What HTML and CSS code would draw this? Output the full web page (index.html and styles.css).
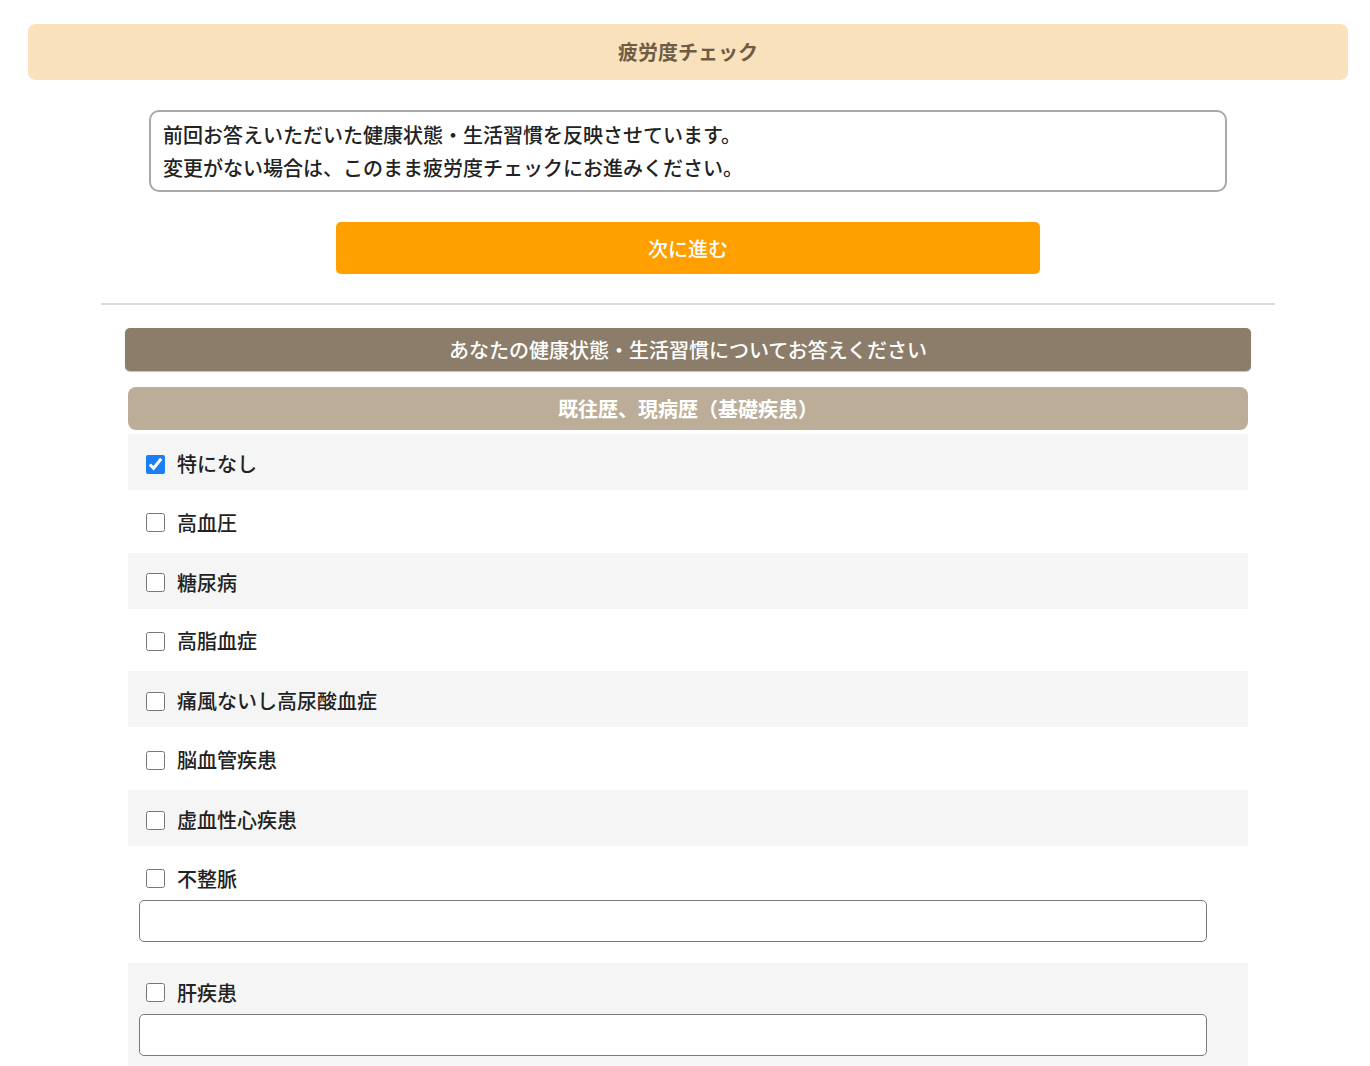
FILE: index.html
```html
<!DOCTYPE html>
<html lang="ja">
<head>
    <meta charset="UTF-8">
    <meta name="viewport" content="width=device-width, initial-scale=1.0">
    <title>疲労度チェック</title>
    <link rel="stylesheet" href="styles.css">
</head>
<body>
    <div class="page">
        <h1 class="page-title">疲労度チェック</h1>

        <div class="notice">
            <p>前回お答えいただいた健康状態・生活習慣を反映させています。</p>
            <p>変更がない場合は、このまま疲労度チェックにお進みください。</p>
        </div>

        <div class="actions">
            <button type="button" class="btn-next">次に進む</button>
        </div>

        <div class="content">
            <hr class="divider">

            <div class="section">
                <h2 class="section-title">あなたの健康状態・生活習慣についてお答えください</h2>

                <div class="question">
                    <h3 class="question-title">既往歴、現病歴（基礎疾患）</h3>
                    <ul class="options">
                        <li class="option">
                            <label class="check"><input type="checkbox" checked><span>特になし</span></label>
                        </li>
                        <li class="option">
                            <label class="check"><input type="checkbox"><span>高血圧</span></label>
                        </li>
                        <li class="option">
                            <label class="check"><input type="checkbox"><span>糖尿病</span></label>
                        </li>
                        <li class="option">
                            <label class="check"><input type="checkbox"><span>高脂血症</span></label>
                        </li>
                        <li class="option">
                            <label class="check"><input type="checkbox"><span>痛風ないし高尿酸血症</span></label>
                        </li>
                        <li class="option">
                            <label class="check"><input type="checkbox"><span>脳血管疾患</span></label>
                        </li>
                        <li class="option">
                            <label class="check"><input type="checkbox"><span>虚血性心疾患</span></label>
                        </li>
                        <li class="option">
                            <label class="check"><input type="checkbox"><span>不整脈</span></label>
                            <input type="text" class="note">
                        </li>
                        <li class="option">
                            <label class="check"><input type="checkbox"><span>肝疾患</span></label>
                            <input type="text" class="note">
                        </li>
                    </ul>
                </div>
            </div>
        </div>
    </div>
</body>
</html>
```

FILE: styles.css
```css
body {
    margin: 0;
    font-family: "Noto Sans CJK JP", "Noto Sans", sans-serif;
    font-size: 20px;
    font-weight: 500;
    color: #222222;
    background: #ffffff;
}

.page {
    width: 1320px;
    margin-left: 28px;
    padding-top: 24px;
}

.page-title {
    margin: 0;
    height: 56px;
    line-height: 56px;
    background: #f9e1bc;
    border-radius: 8px;
    text-align: center;
    font-size: 20px;
    font-weight: bold;
    color: #6e5c44;
}

.notice {
    width: 1078px;
    box-sizing: border-box;
    margin: 30px auto 0;
    padding: 6px 12px;
    border: 2px solid #a9a9a9;
    border-radius: 10px;
}

.notice p {
    margin: 0;
    line-height: 33px;
}

.actions {
    display: flex;
    justify-content: center;
    margin-top: 30px;
}

.btn-next {
    width: 704px;
    height: 52px;
    border: none;
    border-radius: 5px;
    background: #ffa000;
    color: #ffffff;
    font-family: inherit;
    font-size: 20px;
    font-weight: 500;
    cursor: pointer;
}

.content {
    width: 1174px;
    margin: 0 auto;
}

.divider {
    margin: 29px 0 0;
    border: none;
    border-top: 2px solid #dadada;
}

.section {
    padding: 0 24px;
}

.section-title {
    margin: 23px 0 0;
    height: 43px;
    line-height: 43px;
    background: #8b7d6a;
    border-radius: 5px;
    box-shadow: 0 1px 1px rgba(0, 0, 0, 0.25);
    text-align: center;
    font-size: 20px;
    font-weight: 500;
    color: #ffffff;
}

.question {
    margin: 0 3px;
}

.question-title {
    margin: 16px 0 4px;
    height: 43px;
    line-height: 43px;
    background: #bbad98;
    border-radius: 8px;
    text-align: center;
    font-size: 20px;
    font-weight: bold;
    color: #ffffff;
}

.options {
    list-style: none;
    margin: 0;
    padding: 0;
}

.option {
    padding: 20.7px 18px 18px;
}

.option:nth-child(odd) {
    background: #f5f5f5;
    padding: 18px 18px 14px;
}

.check {
    display: flex;
    align-items: center;
    gap: 12px;
    height: 24px;
    line-height: 24px;
    cursor: pointer;
}

.check input {
    width: 19px;
    height: 19px;
    margin: 0;
    accent-color: #1a7ef5;
}

.note {
    display: block;
    width: 1068px;
    height: 42px;
    box-sizing: border-box;
    margin: 9px 0 3px -7px;
    padding: 0 10px;
    border: 1.5px solid #7a7a7a;
    border-radius: 5px;
    background: #ffffff;
    font-family: inherit;
    font-size: 18px;
}
```
